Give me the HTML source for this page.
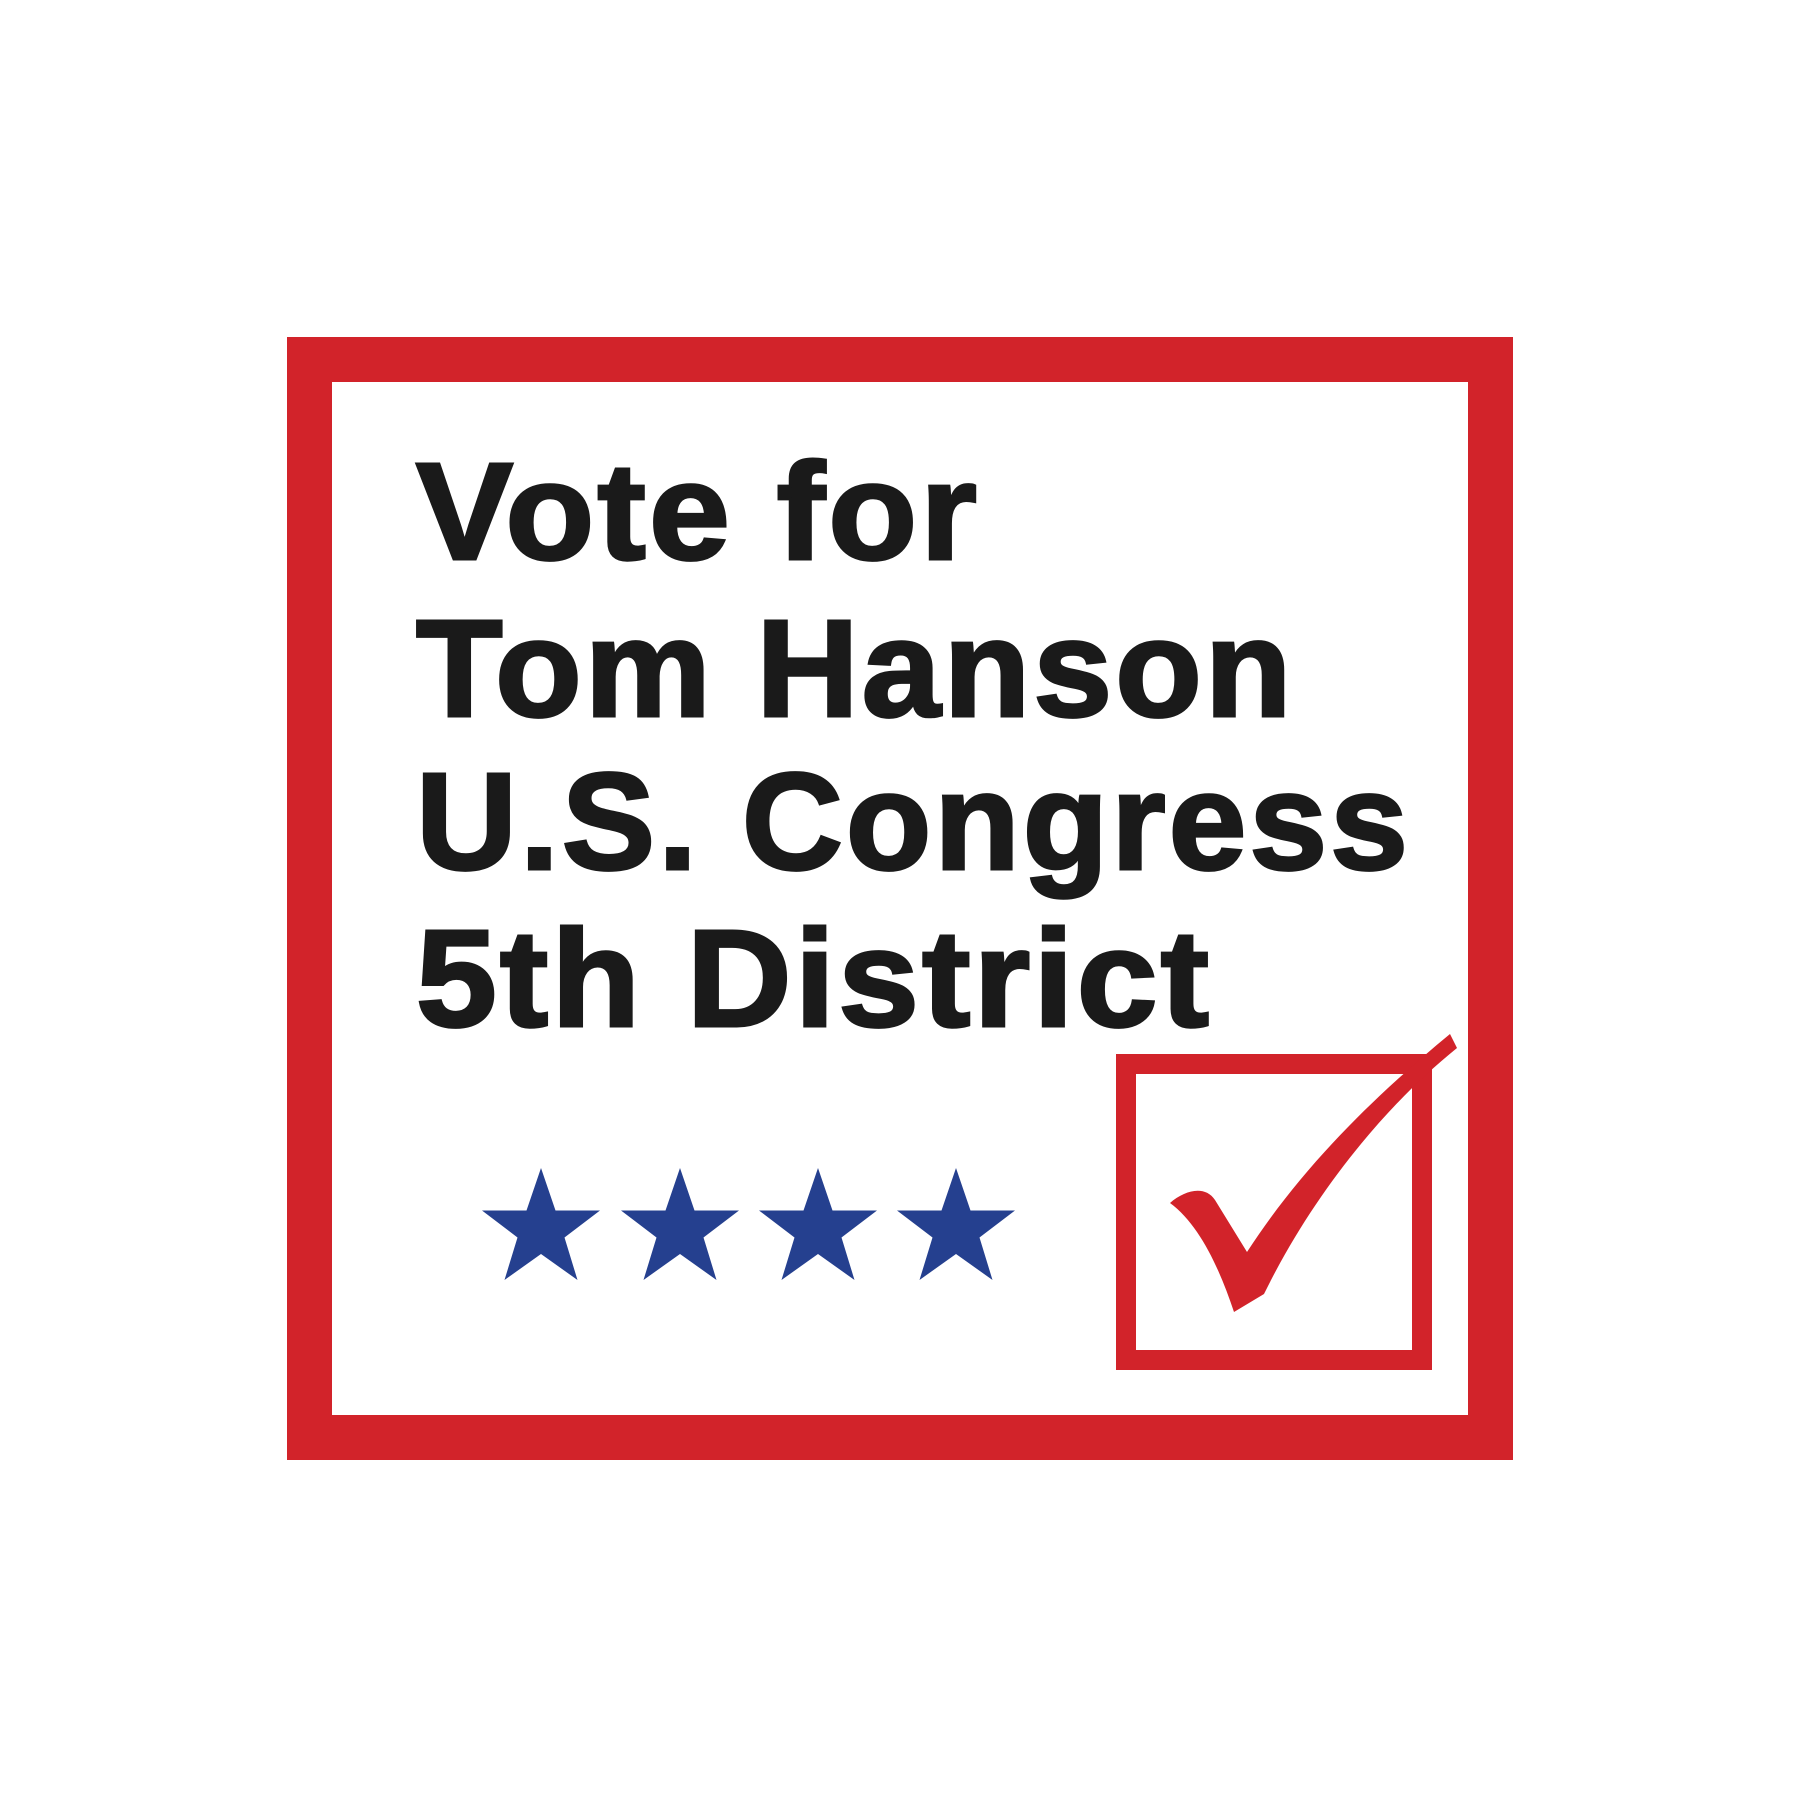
<!DOCTYPE html>
<html><head><meta charset="utf-8"><style>
html,body{margin:0;padding:0;background:#fff;width:1800px;height:1800px;overflow:hidden}
.frame{position:absolute;left:287px;top:337px;width:1226px;height:1123px;box-sizing:border-box;border:45px solid #d2232a;background:#fff}
.t{position:absolute;left:416px;font-family:"Liberation Sans",Arial,sans-serif;font-weight:bold;font-size:138px;letter-spacing:3px;color:#1a1a1a;-webkit-text-stroke:3px #1a1a1a;line-height:1;white-space:nowrap;transform-origin:0 0}
svg{position:absolute;left:0;top:0}
</style></head><body>
<div class="frame"></div>
<div class="t" style="top:443px;transform:scaleX(1.054)">Vote for</div>
<div class="t" style="top:600px;transform:scaleX(1.027)">Tom Hanson</div>
<div class="t" style="top:753px;transform:scaleX(1.013)">U.S. Congress</div>
<div class="t" style="top:910px;transform:scaleX(1.052)">5th District</div>
<svg width="1800" height="1800" viewBox="0 0 1800 1800">
<defs><polygon id="st" points="0,-62 14.5,-19.5 59,-19.5 23.5,7.5 36.5,50 0,24 -36.5,50 -23.5,7.5 -59,-19.5 -14.5,-19.5"/></defs>
<g fill="#25408f">
<use href="#st" x="541" y="1230"/>
<use href="#st" x="680" y="1230"/>
<use href="#st" x="818" y="1230"/>
<use href="#st" x="956" y="1230"/>
</g>
<rect x="1126" y="1064" width="296" height="296" fill="none" stroke="#d2232a" stroke-width="20"/>
<path fill="#d2232a" d="M1170,1203 C1185,1190 1205,1185 1215,1200 L1247,1252 C1300,1170 1370,1100 1450,1034 L1457,1048 C1380,1110 1310,1200 1264,1294 L1234,1312 C1220,1270 1200,1225 1170,1203 Z"/>
</svg>
</body></html>
